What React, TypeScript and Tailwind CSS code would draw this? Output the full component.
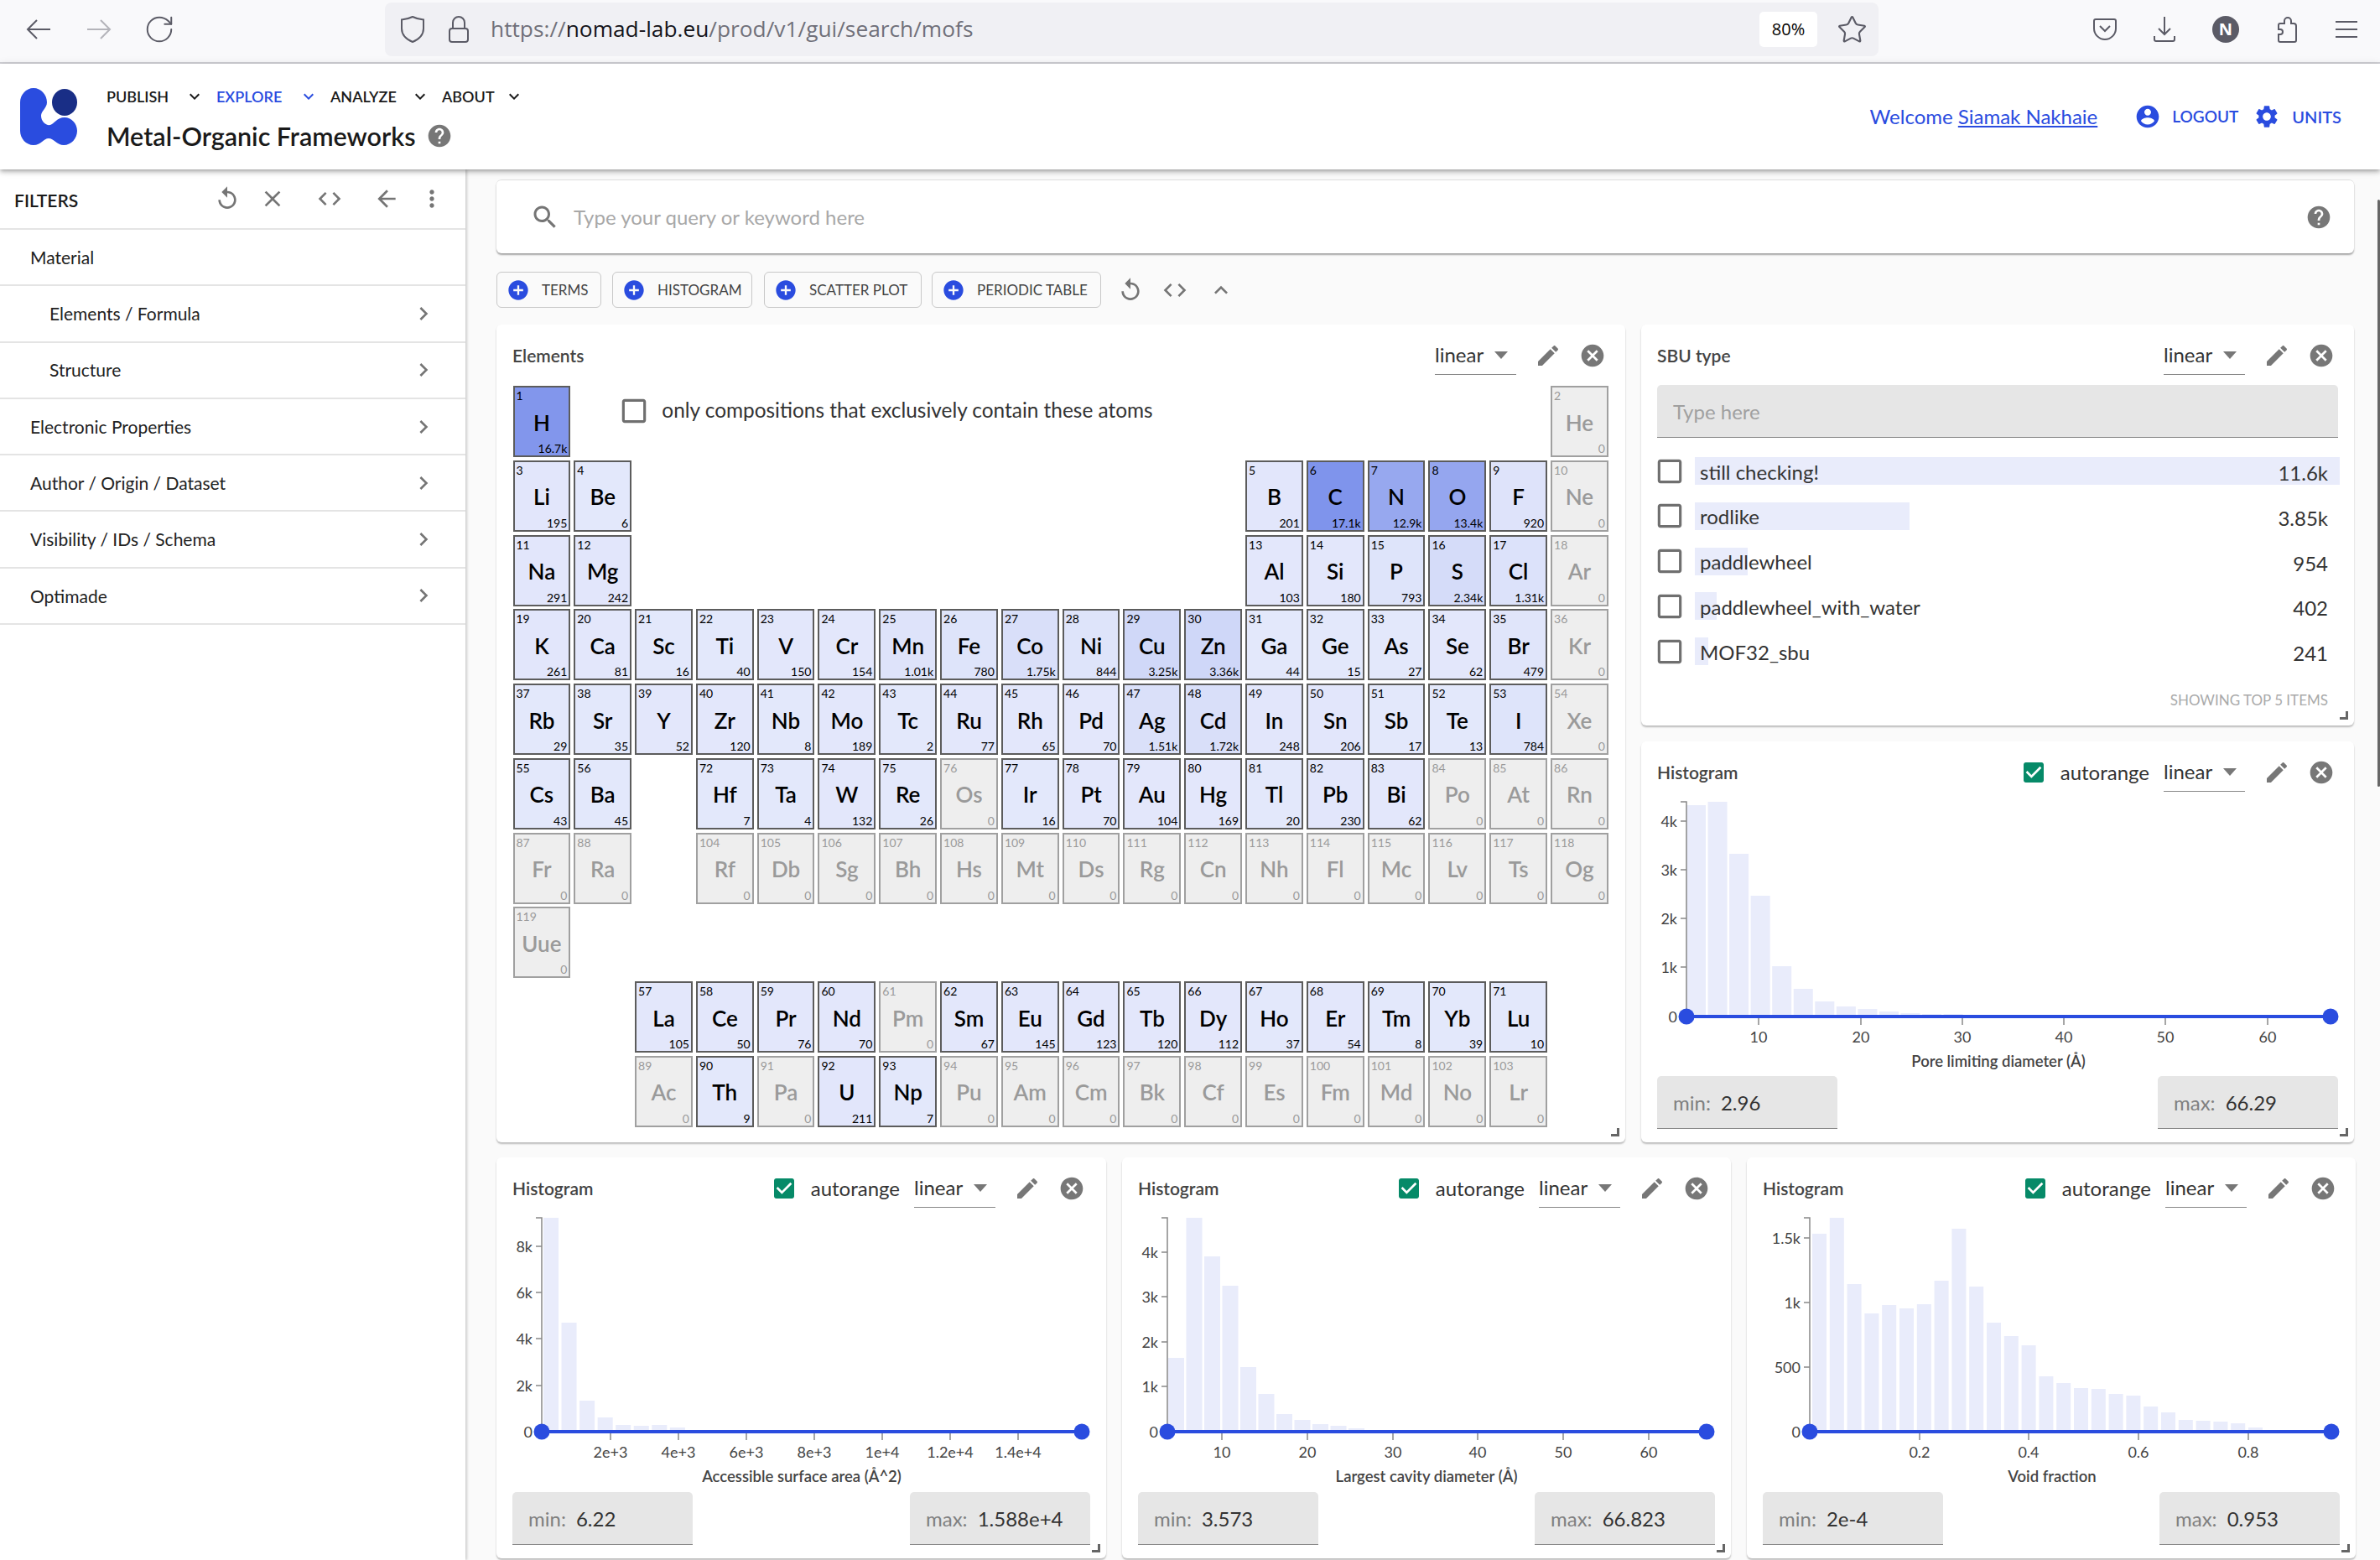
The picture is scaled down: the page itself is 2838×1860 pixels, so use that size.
import React from 'react';
import { RotateCw, Star } from 'lucide-react';

const P = {
  replay: 'M12 5V1L7 6l5 5V7c3.31 0 6 2.69 6 6s-2.69 6-6 6-6-2.69-6-6H4c0 4.42 3.58 8 8 8s8-3.58 8-8-3.58-8-8-8z',
  clear: 'M19 6.41L17.59 5 12 10.59 6.41 5 5 6.41 10.59 12 5 17.59 6.41 19 12 13.41 17.59 19 19 17.59 13.41 12z',
  code: 'M9.4 16.6L4.8 12l4.6-4.6L8 6l-6 6 6 6 1.4-1.4zm5.2 0l4.6-4.6-4.6-4.6L16 6l6 6-6 6-1.4-1.4z',
  back: 'M20 11H7.83l5.59-5.59L12 4l-8 8 8 8 1.41-1.41L7.83 13H20v-2z',
  more: 'M12 8c1.1 0 2-.9 2-2s-.9-2-2-2-2 .9-2 2 .9 2 2 2zm0 2c-1.1 0-2 .9-2 2s.9 2 2 2 2-.9 2-2-.9-2-2-2zm0 6c-1.1 0-2 .9-2 2s.9 2 2 2 2-.9 2-2-.9-2-2-2z',
  next: 'M10 6L8.59 7.41 13.17 12l-4.58 4.59L10 18l6-6z',
  down: 'M16.59 8.59L12 13.17 7.41 8.59 6 10l6 6 6-6z',
  up: 'M12 8l-6 6 1.41 1.41L12 10.83l4.59 4.58L18 14z',
  help: 'M12 2C6.48 2 2 6.48 2 12s4.48 10 10 10 10-4.48 10-10S17.52 2 12 2zm1 17h-2v-2h2v2zm2.07-7.75l-.9.92C13.45 12.9 13 13.5 13 15h-2v-.5c0-1.1.45-2.1 1.17-2.83l1.24-1.26c.37-.36.59-.86.59-1.41 0-1.1-.9-2-2-2s-2 .9-2 2H8c0-2.21 1.79-4 4-4s4 1.79 4 4c0 .88-.36 1.68-.93 2.25z',
  search: 'M15.5 14h-.79l-.28-.27C15.41 12.59 16 11.11 16 9.5 16 5.91 13.09 3 9.5 3S3 5.91 3 9.5 5.91 16 9.5 16c1.61 0 3.09-.59 4.23-1.57l.27.28v.79l5 4.99L20.49 19l-4.99-5zm-6 0C7.01 14 5 11.99 5 9.5S7.01 5 9.5 5 14 7.01 14 9.5 11.99 14 9.5 14z',
  account: 'M12 2C6.48 2 2 6.48 2 12s4.48 10 10 10 10-4.48 10-10S17.52 2 12 2zm0 3c1.66 0 3 1.34 3 3s-1.34 3-3 3-3-1.34-3-3 1.34-3 3-3zm0 14.2c-2.5 0-4.71-1.28-6-3.22.03-1.99 4-3.08 6-3.08 1.99 0 5.97 1.09 6 3.08-1.29 1.94-3.5 3.22-6 3.22z',
  settings: 'M19.14 12.94c.04-.3.06-.61.06-.94 0-.32-.02-.64-.07-.94l2.03-1.58c.18-.14.23-.41.12-.61l-1.92-3.32c-.12-.22-.37-.29-.59-.22l-2.39.96c-.5-.38-1.03-.7-1.62-.94l-.36-2.54c-.04-.24-.24-.41-.48-.41h-3.84c-.24 0-.43.17-.47.41l-.36 2.54c-.59.24-1.13.57-1.62.94l-2.39-.96c-.22-.08-.47 0-.59.22L2.74 8.87c-.12.21-.08.47.12.61l2.03 1.58c-.05.3-.09.63-.09.94s.02.64.07.94l-2.03 1.58c-.18.14-.23.41-.12.61l1.92 3.32c.12.22.37.29.59.22l2.39-.96c.5.38 1.03.7 1.62.94l.36 2.54c.05.24.24.41.48.41h3.84c.24 0 .44-.17.47-.41l.36-2.54c.59-.24 1.13-.56 1.62-.94l2.39.96c.22.08.47 0 .59-.22l1.92-3.32c.12-.22.07-.47-.12-.61l-2.01-1.58zM12 15.6c-1.98 0-3.6-1.62-3.6-3.6s1.62-3.6 3.6-3.6 3.6 1.62 3.6 3.6-1.62 3.6-3.6 3.6z',
  edit: 'M3 17.25V21h3.75L17.81 9.94l-3.75-3.75L3 17.25zM20.71 7.04c.39-.39.39-1.02 0-1.41l-2.34-2.34c-.39-.39-1.02-.39-1.41 0l-1.83 1.83 3.75 3.75 1.83-1.83z',
  cancel: 'M12 2C6.47 2 2 6.47 2 12s4.47 10 10 10 10-4.47 10-10S17.53 2 12 2zm5 13.59L15.59 17 12 13.41 8.41 17 7 15.59 10.59 12 7 8.41 8.41 7 12 10.59 15.59 7 17 8.41 13.41 12 17 15.59z',
  add: 'M12 2C6.48 2 2 6.48 2 12s4.48 10 10 10 10-4.48 10-10S17.52 2 12 2zm5 11h-4v4h-2v-4H7v-2h4V7h2v4h4v2z',
  checked: 'M19 3H5c-1.11 0-2 .9-2 2v14c0 1.1.89 2 2 2h14c1.11 0 2-.9 2-2V5c0-1.1-.89-2-2-2zm-9 14l-5-5 1.41-1.41L10 14.17l7.59-7.59L19 8l-9 9z',
  unchecked: 'M19 5v14H5V5h14m0-2H5c-1.1 0-2 .9-2 2v14c0 1.1.9 2 2 2h14c1.1 0 2-.9 2-2V5c0-1.1-.9-2-2-2z',
};

function Icon({ d, className }: { d: string; className: string }) {
  return (
    <svg viewBox="0 0 24 24" className={`shrink-0 fill-current ${className}`}>
      <path d={d} />
    </svg>
  );
}

const SYMBOLS = 'H He Li Be B C N O F Ne Na Mg Al Si P S Cl Ar K Ca Sc Ti V Cr Mn Fe Co Ni Cu Zn Ga Ge As Se Br Kr Rb Sr Y Zr Nb Mo Tc Ru Rh Pd Ag Cd In Sn Sb Te I Xe Cs Ba La Ce Pr Nd Pm Sm Eu Gd Tb Dy Ho Er Tm Yb Lu Hf Ta W Re Os Ir Pt Au Hg Tl Pb Bi Po At Rn Fr Ra Ac Th Pa U Np Pu Am Cm Bk Cf Es Fm Md No Lr Rf Db Sg Bh Hs Mt Ds Rg Cn Nh Fl Mc Lv Ts Og Uue'.split(' ');

const COUNTS: Record<string, string> = {
  H: '16.7k', Li: '195', Be: '6', B: '201', C: '17.1k', N: '12.9k', O: '13.4k', F: '920', Na: '291', Mg: '242', Al: '103', Si: '180', P: '793', S: '2.34k', Cl: '1.31k',
  K: '261', Ca: '81', Sc: '16', Ti: '40', V: '150', Cr: '154', Mn: '1.01k', Fe: '780', Co: '1.75k', Ni: '844', Cu: '3.25k', Zn: '3.36k', Ga: '44', Ge: '15', As: '27', Se: '62', Br: '479',
  Rb: '29', Sr: '35', Y: '52', Zr: '120', Nb: '8', Mo: '189', Tc: '2', Ru: '77', Rh: '65', Pd: '70', Ag: '1.51k', Cd: '1.72k', In: '248', Sn: '206', Sb: '17', Te: '13', I: '784',
  Cs: '43', Ba: '45', Hf: '7', Ta: '4', W: '132', Re: '26', Ir: '16', Pt: '70', Au: '104', Hg: '169', Tl: '20', Pb: '230', Bi: '62',
  La: '105', Ce: '50', Pr: '76', Nd: '70', Sm: '67', Eu: '145', Gd: '123', Tb: '120', Dy: '112', Ho: '37', Er: '54', Tm: '8', Yb: '39', Lu: '10', Th: '9', U: '211', Np: '7',
};

// [column, first Z, last Z] for every run of elements in a table row
const TABLE: number[][][] = [
  [[0, 1, 1], [17, 2, 2]],
  [[0, 3, 4], [12, 5, 10]],
  [[0, 11, 12], [12, 13, 18]],
  [[0, 19, 36]],
  [[0, 37, 54]],
  [[0, 55, 56], [3, 72, 86]],
  [[0, 87, 88], [3, 104, 118]],
  [[0, 119, 119]],
  [[2, 57, 71]],
  [[2, 89, 103]],
];

function ElementCell({ z, col, row }: { z: number; col: number; row: number }) {
  const symbol = SYMBOLS[z - 1];
  const label = COUNTS[symbol];
  const value = label ? parseFloat(label) * (label.endsWith('k') ? 1000 : 1) : 0;
  const alpha = 0.13 + (0.47 * value) / 17100;
  const on = value > 0;
  return (
    <div
      className={`flex h-[85px] flex-col justify-between border-2 px-[2px] ${on ? 'border-[#5c5c5c] text-black' : 'border-[#a0a0a0] bg-[#eeeeee] text-[#9a9a9a]'}`}
      style={{ gridColumn: col + 1, gridRow: row + 1, backgroundColor: on ? `rgba(42,76,223,${alpha})` : undefined }}
    >
      <div className="pt-[2px] text-[14px] leading-[16px]">{z}</div>
      <div className="text-center text-[26px] leading-[30px] font-semibold">{symbol}</div>
      <div className="text-right text-[14px] leading-[16px]">{label || '0'}</div>
    </div>
  );
}

function CardHeader({ title, autorange, narrow }: { title: string; autorange?: boolean; narrow?: boolean }) {
  return (
    <div className={`flex h-[66px] shrink-0 items-center pt-[8px] pl-[19px] ${narrow ? 'pr-[25px]' : 'pr-[23px]'}`}>
      <div className="text-[21px] font-semibold text-[#444]">{title}</div>
      {autorange && (
        <div className="ml-auto flex items-center gap-[16px] pr-[17px]">
          <Icon d={P.checked} className="h-[32px] w-[32px] text-[#068a68]" />
          <span className="text-[24px] text-[#333]">autorange</span>
        </div>
      )}
      <div className={`relative flex h-[46px] w-[97px] items-center border-b-[1.5px] border-[#888] pb-[1px] text-[24px] text-[#333] ${autorange ? '' : 'ml-auto'}`}>
        linear
        <svg viewBox="0 0 16 9" className="absolute top-[18px] right-[10px] h-[9px] w-[16px] fill-[#777]">
          <path d="M0 0h16L8 9z" />
        </svg>
      </div>
      <Icon d={P.edit} className="ml-[22px] h-[32px] w-[32px] text-[#777]" />
      <Icon d={P.cancel} className="ml-[21px] h-[32px] w-[32px] text-[#777]" />
    </div>
  );
}

function ResizeHandle() {
  return <div className="absolute right-[7px] bottom-[7px] h-[10px] w-[10px] border-r-[3px] border-b-[3px] border-[#666]" />;
}

function RangeInput({ label, value }: { label: string; value: string }) {
  return (
    <div className="flex h-[63px] w-[215px] items-center gap-[12px] rounded-t-[5px] border-b-[1.5px] border-[#888] bg-[#e6e6e6] pt-[2px] pl-[19px] text-[24px]">
      <span className="text-[#808080]">{label}</span>
      <span className="text-[#333]">{value}</span>
    </div>
  );
}

type Hist = {
  left: number;
  width: number;
  top: number;
  axisX: number;
  endX: number;
  topY: number;
  baseY: number;
  yTicks: [string, number][];
  xTicks: [string, number][];
  barX: number;
  barPitch: number;
  barW: number;
  tops: number[];
  label: string;
  labelX: number;
  min: string;
  max: string;
  narrow?: boolean;
};

function Histogram({ h }: { h: Hist }) {
  // reference values are page coordinates: shift to the chart's own origin
  const ox = h.left;
  const oy = h.top + 66;
  const base = h.baseY - oy;
  return (
    <div className="relative flex h-[478px] flex-col rounded-[6px] bg-white shadow-[0_2px_2px_rgba(0,0,0,0.25)]" style={{ width: h.width }}>
      <CardHeader title="Histogram" autorange narrow={h.narrow} />
      <svg className="h-[333px] w-full shrink-0">
        {h.tops.map((t, i) => (
          <rect key={i} x={h.barX + i * h.barPitch - ox} y={t - oy} width={h.barW} height={h.baseY - t} fill="#e9ecfb" />
        ))}
        <path d={`M${h.axisX - ox - 7} ${h.topY - oy}H${h.axisX - ox}V${base}`} fill="none" stroke="#888" strokeWidth="1.5" />
        {h.yTicks.map(([label, y]) => (
          <g key={label}>
            <line x1={h.axisX - ox - 7} x2={h.axisX - ox} y1={y - oy} y2={y - oy} stroke="#888" strokeWidth="1.5" />
            <text x={h.axisX - ox - 11} y={y - oy + 7} textAnchor="end" className="fill-[#444] text-[18px]">{label}</text>
          </g>
        ))}
        {h.xTicks.map(([label, x]) => (
          <g key={label}>
            <line x1={x - ox} x2={x - ox} y1={base} y2={base + 10} stroke="#888" strokeWidth="1.5" />
            <text x={x - ox} y={base + 31} textAnchor="middle" className="fill-[#444] text-[18px]">{label}</text>
          </g>
        ))}
        <text x={h.labelX - ox} y={base + 60} textAnchor="middle" className="fill-[#444] text-[18.5px] font-semibold">{h.label}</text>
        <line x1={h.axisX - ox} x2={h.endX - ox} y1={base} y2={base} stroke="#2a4cdf" strokeWidth="4" />
        <circle cx={h.axisX - ox} cy={base} r="9.5" fill="#2a4cdf" />
        <circle cx={h.endX - ox} cy={base} r="9.5" fill="#2a4cdf" />
      </svg>
      <div className="flex justify-between pr-[19px] pl-[19px]">
        <RangeInput label="min:" value={h.min} />
        <RangeInput label="max:" value={h.max} />
      </div>
      <ResizeHandle />
    </div>
  );
}

const PORE: Hist = {
  left: 1957, width: 850, top: 884, axisX: 2011, endX: 2779, topY: 956, baseY: 1212,
  yTicks: [['4k', 979], ['3k', 1037], ['2k', 1095], ['1k', 1153], ['0', 1212]],
  xTicks: [['10', 2097], ['20', 2219], ['30', 2340], ['40', 2461], ['50', 2582], ['60', 2704]],
  barX: 2011, barPitch: 25.55, barW: 23,
  tops: [960, 956, 1018, 1068, 1152, 1179, 1194, 1200, 1203, 1206, 1208, 1209, 1209],
  label: 'Pore limiting diameter (Å)', labelX: 2383, min: '2.96', max: '66.29',
};
const SURFACE: Hist = {
  left: 591, width: 727, top: 1380, axisX: 645, endX: 1289, topY: 1452, baseY: 1707,
  yTicks: [['8k', 1486], ['6k', 1541], ['4k', 1596], ['2k', 1652], ['0', 1707]],
  xTicks: [['2e+3', 727], ['4e+3', 808], ['6e+3', 889], ['8e+3', 970], ['1e+4', 1051], ['1.2e+4', 1132], ['1.4e+4', 1213]],
  barX: 647, barPitch: 21.55, barW: 18,
  tops: [1452, 1577, 1670, 1690, 1699, 1700, 1699, 1702],
  label: 'Accessible surface area (Å^2)', labelX: 955, min: '6.22', max: '1.588e+4', narrow: true,
};
const CAVITY: Hist = {
  left: 1337, width: 726, top: 1380, axisX: 1391, endX: 2034, topY: 1452, baseY: 1707,
  yTicks: [['4k', 1493], ['3k', 1546], ['2k', 1600], ['1k', 1653], ['0', 1707]],
  xTicks: [['10', 1456], ['20', 1558], ['30', 1660], ['40', 1761], ['50', 1863], ['60', 1965]],
  barX: 1392, barPitch: 21.5, barW: 19,
  tops: [1619, 1452, 1498, 1533, 1630, 1662, 1686, 1693, 1698, 1700, 1703, 1705, 1705, 1705],
  label: 'Largest cavity diameter (Å)', labelX: 1700, min: '3.573', max: '66.823', narrow: true,
};
const VOID: Hist = {
  left: 2082, width: 726, top: 1380, axisX: 2157, endX: 2779, topY: 1452, baseY: 1707,
  yTicks: [['1.5k', 1476], ['1k', 1553], ['500', 1630], ['0', 1707]],
  xTicks: [['0.2', 2288], ['0.4', 2418], ['0.6', 2549], ['0.8', 2680]],
  barX: 2160, barPitch: 20.8, barW: 17,
  tops: [303, 246, 483, 588, 558, 570, 555, 471, 285, 492, 621, 669, 702, 813, 837, 855, 858, 876, 882, 921, 942, 969, 972, 975, 981, 996, 1005].map((v) => 1370 + v / 3),
  label: 'Void fraction', labelX: 2446, min: '2e-4', max: '0.953',
};

const SBU = [
  { name: 'still checking!', count: '11.6k', w: 769 },
  { name: 'rodlike', count: '3.85k', w: 256 },
  { name: 'paddlewheel', count: '954', w: 63 },
  { name: 'paddlewheel_with_water', count: '402', w: 26 },
  { name: 'MOF32_sbu', count: '241', w: 16 },
];

function BrowserBar() {
  return (
    <div className="relative h-[76px] shrink-0 border-b-2 border-[#cfcfd4] bg-[#f9f9fb] font-[family-name:'Open_Sans',sans-serif]">
      <svg viewBox="0 0 30 26" className="absolute top-[22px] left-[31px] h-[26px] w-[30px] fill-none stroke-[#5b5b66] stroke-2">
        <path d="M29 13H2M13 2L2 13l11 11" />
      </svg>
      <svg viewBox="0 0 30 26" className="absolute top-[22px] left-[103px] h-[26px] w-[30px] fill-none stroke-[#b4b4ba] stroke-2">
        <path d="M1 13h27M17 2l11 11-11 11" />
      </svg>
      <RotateCw strokeWidth={1.25} className="absolute top-[16px] left-[171px] h-[38px] w-[38px] text-[#5b5b66]" />
      <div className="absolute top-[3px] left-[459px] flex h-[64px] w-[1781px] items-center rounded-[8px] bg-[#f0f0f4] pl-[126px]">
        <svg viewBox="0 0 30 32" className="absolute left-[18px] h-[32px] w-[30px] fill-none stroke-[#5b5b66] stroke-2">
          <path d="M15 1c4 2 8 3 13 3.500V15c0 8-6 13-13 16C8 28 2 23 2 15V4.500C7 4 11 3 15 1z" />
        </svg>
        <svg viewBox="0 0 26 32" className="absolute left-[75px] h-[32px] w-[26px] fill-none stroke-[#5b5b66] stroke-2">
          <rect x="2" y="15" width="22" height="16" rx="3" />
          <path d="M6 15V8a7 7 0 0 1 14 0v7" />
        </svg>
        <span className="text-[26.3px] text-[#70707a]">https://<span className="text-[#15141a]">nomad-lab.eu</span>/prod/v1/gui/search/mofs</span>
        <span className="absolute left-[1639px] flex h-[42px] w-[69px] items-center justify-center rounded-[5px] bg-white text-[20px] text-black">80%</span>
        <Star strokeWidth={1.4} className="absolute left-[1731px] h-[37px] w-[37px] text-[#5b5b66]" />
      </div>
      <svg viewBox="0 0 28 30" className="absolute top-[20px] left-[2496px] h-[30px] w-[28px] fill-none stroke-[#5b5b66] stroke-2">
        <path d="M3 3h22a2 2 0 0 1 2 2v9c0 7-6 13-13 13S1 21 1 14V5a2 2 0 0 1 2-2z" />
        <path d="M8 11l6 6 6-6" />
      </svg>
      <svg viewBox="0 0 28 32" className="absolute top-[19px] left-[2567px] h-[32px] w-[28px] fill-none stroke-[#5b5b66] stroke-2">
        <path d="M14 1v21M7 15l7 7 7-7M2 24v4a2 2 0 0 0 2 2h20a2 2 0 0 0 2-2v-4" />
      </svg>
      <div className="absolute top-[19px] left-[2638px] flex h-[32px] w-[32px] items-center justify-center rounded-full bg-[#5b5b66] text-[20px] font-bold text-white">N</div>
      <svg viewBox="0 0 28 32" className="absolute top-[19px] left-[2713px] h-[32px] w-[28px] fill-none stroke-[#5b5b66] stroke-2">
        <path d="M6 31a2 2 0 0 1-2-2v-7h2a3 3 0 0 0 0-6H4v-5a2 2 0 0 1 2-2h5V6a4 4 0 0 1 8 0v3h3a3 3 0 0 1 3 3v17a2 2 0 0 1-2 2z" />
      </svg>
      <svg viewBox="0 0 26 22" className="absolute top-[24px] left-[2785px] h-[22px] w-[26px] fill-none stroke-[#5b5b66] stroke-2">
        <path d="M0 2h26M0 11h26M0 20h26" />
      </svg>
    </div>
  );
}

function NavItem({ label, width, active }: { label: string; width: string; active?: boolean }) {
  return (
    <div className={`flex items-center ${width} ${active ? 'text-[#2a4cdf]' : 'text-[#1a1a1a]'}`}>
      <span className="text-[18px] font-semibold">{label}</span>
      <Icon d={P.down} className="mr-[14px] ml-auto h-[24px] w-[24px]" />
    </div>
  );
}

function AppHeader() {
  return (
    <div className="relative z-10 flex h-[126px] shrink-0 items-center bg-white pr-[46px] pl-[24px] shadow-[0_2px_4px_-1px_rgba(0,0,0,0.2),0_4px_5px_0_rgba(0,0,0,0.14),0_1px_10px_0_rgba(0,0,0,0.12)]">
      <svg viewBox="0 0 68 68" className="h-[68px] w-[68px] shrink-0">
        <path fill="#2a4cdf" d="M16 0C25 0 32 8 32 17C32 24 25 27 25 33C25 40 31 45 36 44C40 43 44 35 53 35C61 35 68 42 68 51C68 60 61 68 52 68C44 68 40 60 34 60C28 60 25 68 16 68C7 68 0 60 0 51L0 17C0 8 7 0 16 0Z" />
        <ellipse cx="53" cy="17" rx="15" ry="16" fill="#192e86" />
      </svg>
      <div className="ml-[35px] flex flex-col pt-[3px]">
        <div className="flex h-[30px] items-center uppercase">
          <NavItem label="Publish" width="w-[131px]" />
          <NavItem label="Explore" width="w-[136px]" active />
          <NavItem label="Analyze" width="w-[133px]" />
          <NavItem label="About" width="w-[112px]" />
        </div>
        <div className="mt-[13px] flex items-center gap-[13px]">
          <span className="text-[30.5px] leading-[38px] font-semibold text-[#1a1a1a]">Metal-Organic Frameworks</span>
          <Icon d={P.help} className="h-[32px] w-[32px] text-[#777]" />
        </div>
      </div>
      <div className="ml-auto flex items-center text-[#2a4cdf]">
        <span className="text-[24px]">Welcome <span className="underline">Siamak Nakhaie</span></span>
        <Icon d={P.account} className="ml-[44px] h-[32px] w-[32px]" />
        <span className="ml-[13px] text-[19px] font-semibold">LOGOUT</span>
        <Icon d={P.settings} className="ml-[18px] h-[32px] w-[32px]" />
        <span className="ml-[14px] text-[20px] font-semibold">UNITS</span>
      </div>
    </div>
  );
}

const FILTERS = [
  { name: 'Material' },
  { name: 'Elements / Formula', sub: true, arrow: true },
  { name: 'Structure', sub: true, arrow: true },
  { name: 'Electronic Properties', arrow: true },
  { name: 'Author / Origin / Dataset', arrow: true },
  { name: 'Visibility / IDs / Schema', arrow: true },
  { name: 'Optimade', arrow: true },
];

function Sidebar() {
  return (
    <div className="relative z-[5] w-[555px] shrink-0 bg-white shadow-[2px_0_3px_rgba(0,0,0,0.18)]">
      <div className="relative flex h-[72px] items-center border-b-2 border-[#e4e4e4] pl-[17px] text-[#757575]">
        <span className="pt-[3px] text-[21px] font-semibold text-[#1a1a1a]">FILTERS</span>
        <Icon d={P.replay} className="absolute left-[255px] h-[32px] w-[32px]" />
        <Icon d={P.clear} className="absolute left-[309px] h-[32px] w-[32px]" />
        <Icon d={P.code} className="absolute left-[377px] h-[32px] w-[32px]" />
        <Icon d={P.back} className="absolute left-[445px] h-[32px] w-[32px]" />
        <Icon d={P.more} className="absolute left-[499px] h-[32px] w-[32px]" />
      </div>
      {FILTERS.map((f) => (
        <div key={f.name} className={`flex h-[67.3px] items-center border-b-2 border-[#e4e4e4] pr-[34px] text-[21px] text-[#222] ${f.sub ? 'pl-[59px]' : 'pl-[36px]'}`}>
          {f.name}
          {f.arrow && <Icon d={P.next} className="ml-auto h-[32px] w-[32px] text-[#757575]" />}
        </div>
      ))}
    </div>
  );
}

function AddButton({ label, width }: { label: string; width: string }) {
  return (
    <div className={`flex h-[43px] items-center gap-[14px] rounded-[6px] border border-[#c8c8c8] pl-[11px] text-[17px] text-[#444] ${width}`}>
      <Icon d={P.add} className="h-[28px] w-[28px] text-[#2a4cdf]" />
      {label}
    </div>
  );
}

function ElementsCard() {
  return (
    <div className="relative h-[975px] w-[1346px] shrink-0 rounded-[6px] bg-white shadow-[0_2px_2px_rgba(0,0,0,0.25)]">
      <CardHeader title="Elements" />
      <div className="mt-[7px] ml-[19.5px] grid grid-cols-[repeat(18,68.8px)] gap-x-[4px] gap-y-[3.75px]">
        {TABLE.flatMap((runs, row) =>
          runs.flatMap(([col, from, to]) =>
            Array.from({ length: to - from + 1 }, (_, i) => <ElementCell key={from + i} z={from + i} col={col + i} row={row} />),
          ),
        )}
        <div className="col-span-14 col-start-2 row-start-1 flex items-center gap-[14px] pb-[26px] pl-[53px] text-[24.4px] text-[#333]">
          <Icon d={P.unchecked} className="h-[38px] w-[38px] text-[#6f6f6f]" />
          only compositions that exclusively contain these atoms
        </div>
      </div>
      <ResizeHandle />
    </div>
  );
}

function SbuCard() {
  return (
    <div className="relative h-[478px] w-[850px] rounded-[6px] bg-white shadow-[0_2px_2px_rgba(0,0,0,0.25)]">
      <CardHeader title="SBU type" />
      <div className="mx-[19px] mt-[6px] flex h-[63px] items-center rounded-t-[5px] border-b-[1.5px] border-[#888] bg-[#e6e6e6] pt-[2px] pl-[19px] text-[24px] text-[#a0a0a0]">Type here</div>
      <div className="mt-[23px] flex flex-col gap-[20.8px] pr-[17px] pl-[15px]">
        {SBU.map((s) => (
          <div key={s.name} className="flex h-[33px] items-center">
            <Icon d={P.unchecked} className="h-[38px] w-[38px] text-[#6f6f6f]" />
            <div className="relative ml-[11px] flex h-[33px] flex-1 items-center justify-between pr-[14px] pl-[6px] text-[24px] text-[#333]">
              <div className="absolute inset-y-0 left-0 bg-[#e9ecfb]" style={{ width: s.w }} />
              <span className="relative pt-[2px]">{s.name}</span>
              <span className="relative pt-[5px]">{s.count}</span>
            </div>
          </div>
        ))}
      </div>
      <div className="mt-[29px] pr-[31px] text-right text-[17px] text-[#aaa]">SHOWING TOP 5 ITEMS</div>
      <ResizeHandle />
    </div>
  );
}

export default function App() {
  return (
    <div className="relative flex h-[1860px] w-full flex-col overflow-hidden bg-[#fafafa] font-[family-name:Lato,sans-serif]">
      <BrowserBar />
      <AppHeader />
      <div className="flex min-h-0 flex-1">
        <Sidebar />
        <div className="flex-1 pt-[12px] pl-[37px]">
          <div className="flex h-[88px] w-[2215px] items-center rounded-[6px] border-t border-[#ddd] bg-white pr-[26px] pl-[40px] shadow-[0_2px_2px_rgba(0,0,0,0.35)]">
            <Icon d={P.search} className="h-[36px] w-[36px] text-[#757575]" />
            <span className="ml-[16px] text-[24px] text-[#a8a8a8]">Type your query or keyword here</span>
            <Icon d={P.help} className="ml-auto h-[32px] w-[32px] text-[#777]" />
          </div>
          <div className="mt-[22px] flex items-center">
            <AddButton label="TERMS" width="w-[125px]" />
            <div className="ml-[13px]"><AddButton label="HISTOGRAM" width="w-[167px]" /></div>
            <div className="ml-[14px]"><AddButton label="SCATTER PLOT" width="w-[188px]" /></div>
            <div className="ml-[12px]"><AddButton label="PERIODIC TABLE" width="w-[202px]" /></div>
            <Icon d={P.replay} className="ml-[19px] h-[32px] w-[32px] text-[#757575]" />
            <Icon d={P.code} className="ml-[21px] h-[32px] w-[32px] text-[#757575]" />
            <Icon d={P.up} className="ml-[23px] h-[32px] w-[32px] text-[#757575]" />
          </div>
          <div className="mt-[20px] flex gap-[19px]">
            <ElementsCard />
            <div className="flex flex-col gap-[19px]">
              <SbuCard />
              <Histogram h={PORE} />
            </div>
          </div>
          <div className="mt-[18px] flex gap-[19px]">
            <Histogram h={SURFACE} />
            <Histogram h={CAVITY} />
            <Histogram h={VOID} />
          </div>
        </div>
      </div>
      <div className="absolute top-[238px] right-0 h-[700px] w-[3px] rounded-full bg-[#666]" />
    </div>
  );
}
